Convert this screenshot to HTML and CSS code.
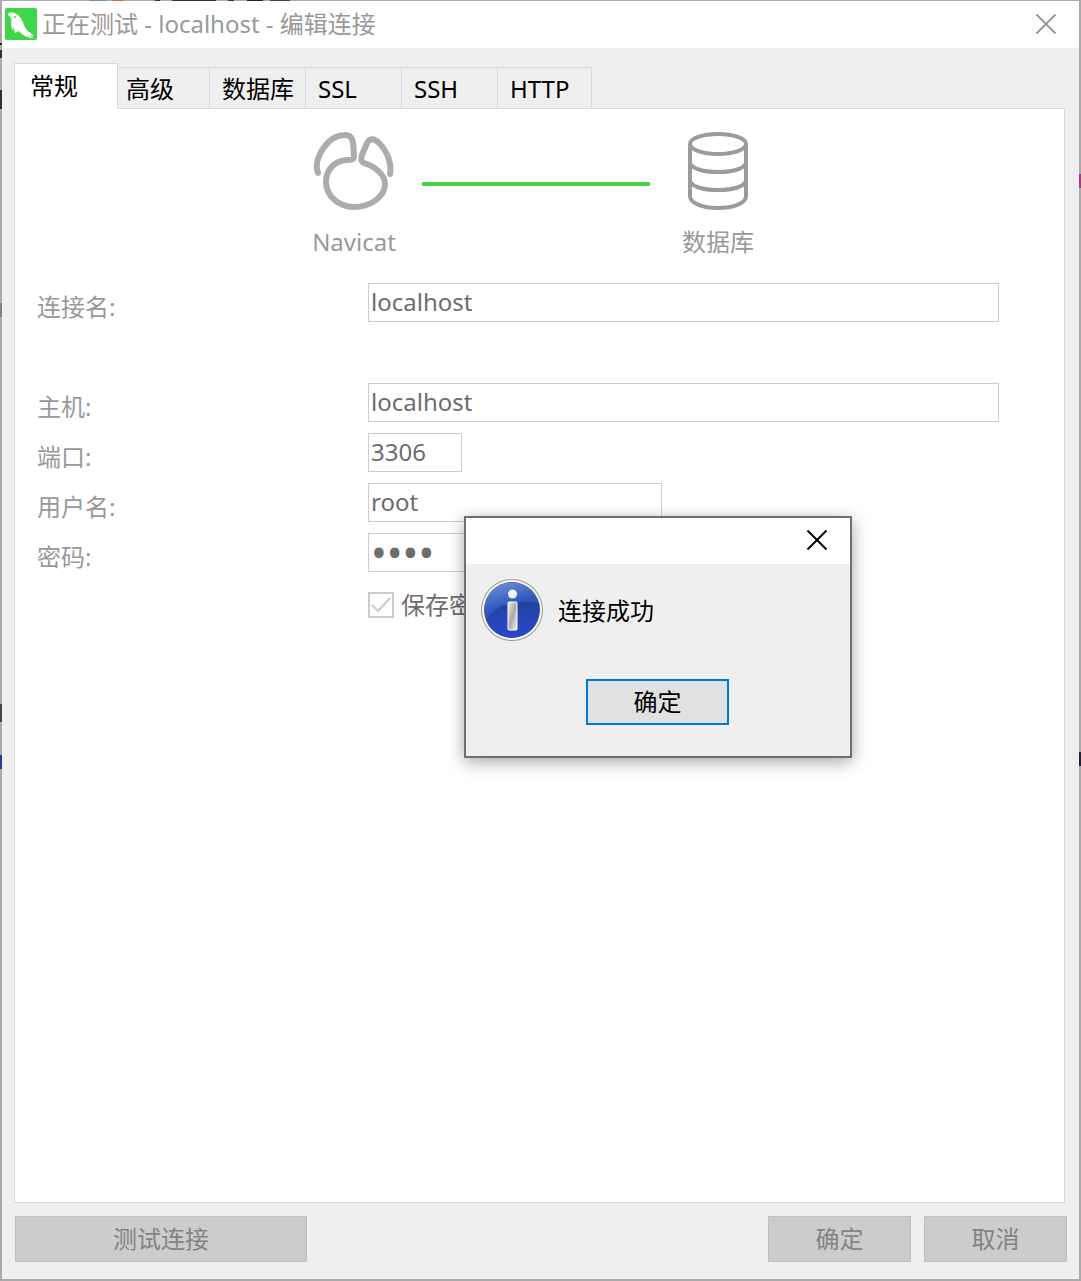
FILE: index.html
```html
<!DOCTYPE html>
<html lang="zh-CN">
<head>
<meta charset="UTF-8">
<meta name="viewport" content="width=device-width, initial-scale=1">
<title>编辑连接</title>
<link rel="stylesheet" href="styles.css">
</head>
<body>

    <div class="window">
        <header class="titlebar">
            <svg class="app-icon" viewBox="0 0 32 32" aria-hidden="true">
                <rect width="32" height="32" rx="2" fill="#3fd64a"/>
                <path d="M3 7C3 5 5 4 7 4.500C12 5 16 9 18 14C19 19 22 23 25 24.500L29 28L24 27.500L29 30C23 30.500 17 27 14 23L10 25L8.500 20L7.500 22C6 18 6 15 6.500 12C6 10 5 8 3 7Z" fill="#fff"/>
                <circle cx="10" cy="9" r="1" fill="#3fd64a"/>
            </svg>
            <h1>正在测试 - localhost - 编辑连接</h1>
            <button type="button" class="close" aria-label="关闭">
                <svg viewBox="0 0 22 22"><path d="M1.500 1.500L20.500 20.500M20.500 1.500L1.500 20.500"/></svg>
            </button>
        </header>

        <nav class="tabs">
            <button type="button" class="tab active">常规</button>
            <button type="button" class="tab narrow">高级</button>
            <button type="button" class="tab">数据库</button>
            <button type="button" class="tab">SSL</button>
            <button type="button" class="tab">SSH</button>
            <button type="button" class="tab last">HTTP</button>
        </nav>

        <main class="panel">
            <div class="diagram">
                <div class="node">
                    <svg viewBox="0 0 84 80" width="84" height="80" fill="none" stroke="#acacac" stroke-width="6" stroke-linecap="round" stroke-linejoin="round">
                        <path d="M6 42C1 28 15 5 32 4C43 3 41 15 42 25C42 29 39 29 35 29C22 30 14 39 14 51C14 65 27 76 42 76C58 76 73 66 73 53C73 43 62 35 52 32C48 30 49 27 50 24L55 12C58 7 62 7 67 12C76 21 80 34 78 43"/>
                    </svg>
                    <span>Navicat</span>
                </div>
                <div class="line"></div>
                <div class="node">
                    <svg viewBox="0 0 84 80" width="84" height="80" fill="none" stroke="#9b9b9b" stroke-width="4">
                        <ellipse cx="42" cy="13" rx="28" ry="10"/>
                        <path d="M14 13V65C14 72 26 77 42 77S70 72 70 65V13M14 31C14 37 26 41 42 41S70 37 70 31M14 49C14 55 26 59 42 59S70 55 70 49"/>
                    </svg>
                    <span>数据库</span>
                </div>
            </div>

            <form class="form">
                <div class="row spaced">
                    <label for="name">连接名:</label>
                    <input type="text" id="name" value="localhost">
                </div>
                <div class="row">
                    <label for="host">主机:</label>
                    <input type="text" id="host" value="localhost">
                </div>
                <div class="row">
                    <label for="port">端口:</label>
                    <input type="text" id="port" class="short" value="3306">
                </div>
                <div class="row">
                    <label for="user">用户名:</label>
                    <input type="text" id="user" class="medium" value="root">
                </div>
                <div class="row">
                    <label for="password">密码:</label>
                    <input type="password" id="password" class="medium" value="root">
                </div>
                <div class="check">
                    <input type="checkbox" id="save" checked>
                    <label for="save">保存密码</label>
                </div>
            </form>
        </main>

        <footer class="footer">
            <button type="button" class="btn wide">测试连接</button>
            <button type="button" class="btn">确定</button>
            <button type="button" class="btn">取消</button>
        </footer>
    </div>

    <div class="dialog" role="dialog" aria-label="连接成功">
        <div class="dialog-bar">
            <button type="button" class="close" aria-label="关闭">
                <svg viewBox="0 0 22 22"><path d="M1.500 1.500L20.500 20.500M20.500 1.500L1.500 20.500"/></svg>
            </button>
        </div>
        <div class="dialog-body">
            <div class="message">
                <svg viewBox="0 0 62 62" width="62" height="62" aria-hidden="true">
                    <defs>
                        <linearGradient id="blue" x1="0" y1="0" x2="0.300" y2="1">
                            <stop offset="0" stop-color="#7296e6"/>
                            <stop offset="0.500" stop-color="#3058b8"/>
                            <stop offset="1" stop-color="#2848c8"/>
                        </linearGradient>
                        <linearGradient id="deep" x1="0" y1="0" x2="0" y2="1">
                            <stop offset="0" stop-color="#22429c"/>
                            <stop offset="1" stop-color="#2b47cc"/>
                        </linearGradient>
                        <linearGradient id="steel" x1="0" y1="0" x2="1" y2="1">
                            <stop offset="0" stop-color="#f4f4f4"/>
                            <stop offset="0.500" stop-color="#a8a8a8"/>
                            <stop offset="1" stop-color="#f8f8f8"/>
                        </linearGradient>
                    </defs>
                    <circle cx="31" cy="31" r="31" fill="#9a9a9a"/>
                    <circle cx="31" cy="31" r="30" fill="#f6f6f6"/>
                    <circle cx="31" cy="31" r="28" fill="#555d78"/>
                    <circle cx="31" cy="31" r="27.500" fill="url(#blue)"/>
                    <path d="M5 40C14 26 38 19 58 24C60 43 48 58.500 31 58.500C19 58.500 8 51 5 40Z" fill="url(#deep)"/>
                    <circle cx="31.500" cy="15" r="4.500" fill="#f2f2f2"/>
                    <rect x="27" y="23" width="9" height="28" rx="1" fill="url(#steel)" stroke="#fff"/>
                </svg>
                <p>连接成功</p>
            </div>
            <button type="button" class="btn primary">确定</button>
        </div>
    </div>

</body>
</html>
```

FILE: styles.css
```css
* {
    box-sizing: border-box;
}

/* thin strips of the desktop show around the window */
body {
    margin: 0;
    font-family: "Noto Sans", "Noto Sans CJK SC", sans-serif;
    font-size: 24px;
    line-height: 32px;
    color: #000;
    background:
        linear-gradient(90deg, transparent 90px, #6c91b5 90px 106px, transparent 106px 112px, #d0694a 112px 123px, transparent 123px 155px, #333 155px 160px, transparent 160px 172px, #333 172px 216px, transparent 216px 228px, #333 228px 234px, transparent 234px 247px, #222 247px 263px, transparent 263px 270px, #444 270px 290px, transparent 290px) 0 0 / 100% 2px no-repeat,
        linear-gradient(transparent 43px, #222 43px 45px, transparent 45px 50px, #333 50px 58px, transparent 58px 90px, #2c3138 90px 109px, transparent 109px 303px, #8d7d78 303px 317px, transparent 317px 704px, #444 704px 722px, transparent 722px 755px, #2a3aa0 755px 769px, transparent 769px) 0 0 / 2px 100% no-repeat,
        linear-gradient(transparent 174px, #a83a84 174px 188px, transparent 188px 752px, #223 752px 766px, transparent 766px) 100% 0 / 2px 100% no-repeat,
        #aaa;
}

button, input {
    font: inherit;
    color: inherit;
}

.window {
    display: flex;
    flex-direction: column;
    min-height: 100vh;
    background-color: #efefef;
    background-clip: padding-box;
    border: 2px solid transparent;
    border-top-width: 1px;
}

.titlebar {
    display: flex;
    align-items: center;
    height: 47px;
    padding: 0 22px 2px 3px;
    background-color: white;
    color: #999;
}

.app-icon {
    width: 32px;
    height: 32px;
    margin-right: 5px;
}

.titlebar h1 {
    flex: 1;
    margin: 0;
    font-size: 24px;
    font-weight: normal;
}

.close {
    display: flex;
    padding: 0;
    border: none;
    background: none;
}

.close svg {
    width: 22px;
    height: 22px;
    fill: none;
    stroke: currentColor;
    stroke-width: 2;
}

.tabs {
    display: flex;
    align-items: flex-end;
    padding: 15px 12px 0;
}

.tab {
    width: 96px;
    height: 41px;
    padding: 2px 0 0 12px;
    border: 1px solid #d9d9d9;
    border-width: 1px 1px 0 0;
    background-color: #efefef;
    text-align: left;
}

.tab.narrow {
    width: 92px;
    padding-left: 8px;
}

.tab.last {
    width: 94px;
}

.tab.active {
    width: 104px;
    height: 46px;
    margin-bottom: -1px;
    padding: 0 0 2px 15px;
    border-left-width: 1px;
    background-color: white;
    z-index: 1;
}

.panel {
    flex: 1;
    margin: 0 14px 0 12px;
    padding: 22px 65px 22px 22px;
    border: 1px solid #d9d9d9;
    background-color: white;
}

.diagram {
    display: flex;
    gap: 26px;
    margin-left: 275px;
    color: #999;
}

.node {
    display: flex;
    flex-direction: column;
    align-items: center;
    gap: 15px;
}

.node span {
    white-space: nowrap;
}

.line {
    width: 228px;
    height: 4px;
    margin-top: 51px;
    background-color: #3fd64a;
}

.form {
    display: flex;
    flex-direction: column;
    gap: 11px;
    margin-top: 25px;
    color: #6d6d6d;
}

.row {
    display: grid;
    grid-template-columns: 331px 1fr;
    height: 39px;
}

.row.spaced {
    margin-bottom: 50px;
}

.row label {
    padding-top: 8px;
    color: #999;
}

.row input {
    width: 100%;
    height: 39px;
    padding: 0 2px 2px;
    border: 1px solid #ccc;
    border-radius: 0;
    background-color: white;
}

.row input[type="password"] {
    font-size: 42px;
}

.row .short {
    width: 94px;
}

.row .medium {
    width: 294px;
}

.check {
    display: flex;
    align-items: center;
    gap: 7px;
    margin: 6px 0 0 331px;
}

.check input {
    appearance: none;
    width: 26px;
    height: 26px;
    margin: 0;
    border: 2px solid #ccc;
}

.check input:checked {
    background: url("data:image/svg+xml,%3Csvg xmlns='http://www.w3.org/2000/svg' viewBox='0 0 22 22'%3E%3Cpath d='M2 11l6 6L20 4' fill='none' stroke='%23ccc' stroke-width='2'/%3E%3C/svg%3E");
}

.footer {
    display: flex;
    gap: 13px;
    padding: 13px 12px 17px 13px;
    color: #838383;
}

.btn {
    width: 143px;
    height: 46px;
    padding: 0;
    border: 1px solid #bfbfbf;
    background-color: #ccc;
}

.btn.wide {
    width: 292px;
    margin-right: auto;
}

.btn.primary {
    border: 2px solid #0078d7;
    background-color: #e1e1e1;
}

.dialog {
    position: absolute;
    left: 464px;
    top: 516px;
    width: 388px;
    border: 2px solid #6f6f6f;
    background-color: #efefef;
    box-shadow: 0 4px 16px rgba(0, 0, 0, 0.35);
}

.dialog-bar {
    display: flex;
    align-items: center;
    justify-content: flex-end;
    height: 46px;
    padding: 0 22px 2px 0;
    background-color: white;
}

.dialog-body {
    display: flex;
    flex-direction: column;
    align-items: center;
    gap: 38px;
    padding: 15px 16px 31px 15px;
}

.message {
    display: flex;
    align-items: center;
    align-self: stretch;
    gap: 15px;
}

.message p {
    margin: 0;
    padding-top: 2px;
}
```
